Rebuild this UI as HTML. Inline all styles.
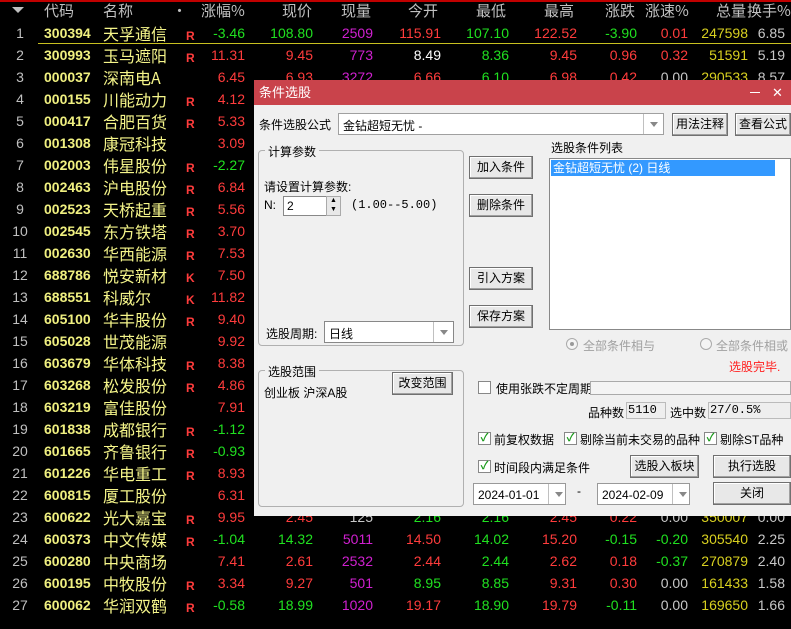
<!DOCTYPE html>
<html><head><meta charset="utf-8">
<style>
*{margin:0;padding:0;box-sizing:border-box}
body{width:791px;height:629px;background:#000;overflow:hidden;position:relative;font-family:"Liberation Sans","Noto Sans CJK SC",sans-serif}
.r{position:absolute;left:0;width:791px;height:22px;font-size:14px;line-height:22px}
.r span{position:absolute;top:0;white-space:nowrap}
.i{left:8px;width:24px;text-align:center;color:#c0c0c0;font-size:14px}
.cd{left:44px;color:#f0f080;font-weight:bold;font-size:14px}
.nm{left:103px;color:#f5f58a;font-size:16px;font-family:"Noto Sans CJK SC",sans-serif}
.mk{left:186px;color:#ff3c3c;font-weight:bold;font-size:12px;top:3px!important}
.c1{left:190px;width:55px;text-align:right}
.c2{left:250px;width:63px;text-align:right}
.c3{left:318px;width:55px;text-align:right}
.c4{left:380px;width:61px;text-align:right}
.c5{left:450px;width:59px;text-align:right}
.c6{left:515px;width:62px;text-align:right}
.c7{left:580px;width:57px;text-align:right}
.c8{left:640px;width:48px;text-align:right}
.c9{left:692px;width:56px;text-align:right;color:#d8d020}
.c10{left:750px;width:35px;text-align:right;color:#c8c8c8}
.R{color:#ff3c3c}.G{color:#20e020}.M{color:#d020d0}.W{color:#fff}.Y{color:#c8c8c8}
.hd{position:absolute;top:0;left:0;width:791px;height:22px;font-size:15px;color:#c0c0c0;line-height:22px;font-family:"Noto Sans CJK SC",sans-serif}
.hd span{position:absolute;top:0}
.dlg{position:absolute;left:254px;top:80px;width:537px;height:436px;background:#f0f0f0;font-size:12px;color:#000;font-family:"Liberation Sans","Noto Sans CJK SC",sans-serif}
.dlg *{position:absolute;white-space:nowrap}
.tb{left:0;top:0;width:537px;height:25px;background:#c9434b;color:#fff;font-size:13px;line-height:25px;padding-left:5px}
.btn{background:#e8e8e8;border:1px solid #707070;box-shadow:inset -1px -1px #a0a0a0,inset 1px 1px #fff;text-align:center;font-size:12px}
.box{background:#fff;border:1px solid #a0a0a0}
.grp{border:1px solid #b0b0b0;border-radius:4px}
.lg{background:#f0f0f0;padding:0 3px;font-size:12px}
.dd{border-left:1px solid #c0c0c0;width:20px;top:0;right:0;height:100%}
.dd:after{content:"";position:absolute;left:6px;top:8px;border:4px solid transparent;border-top:5px solid #888}
.ck{width:13px;height:13px;border:1px solid #888;background:#fff;font-size:11px;color:#1a9a1a;line-height:11px;text-align:center;font-weight:bold}
.t13{font-size:12px}
</style></head><body>
<div style="position:absolute;left:0;top:0;width:791px;height:2px;background:#c00000"></div>
<div class="hd"><span style="left:44px">代码</span><span style="left:103px">名称</span><span style="left:172px">•</span><span style="left:201px">涨幅%</span><span style="left:282px">现价</span><span style="left:341px">现量</span><span style="left:408px">今开</span><span style="left:476px">最低</span><span style="left:544px">最高</span><span style="left:605px">涨跌</span><span style="left:645px">涨速%</span><span style="left:716px">总量</span><span style="left:747px">换手%</span></div>
<div style="position:absolute;left:12px;top:7px;border:6px solid transparent;border-top:6px solid #c0c0c0"></div>
<div style="position:absolute;left:38px;top:43px;width:753px;height:1px;background:#c8c020"></div>

<div class="r" style="top:22px"><span class="i">1</span><span class="cd">300394</span><span class="nm">天孚通信</span><span class="mk">R</span><span class="c1 G">-3.46</span><span class="c2 G">108.80</span><span class="c3 M">2509</span><span class="c4 R">115.91</span><span class="c5 G">107.10</span><span class="c6 R">122.52</span><span class="c7 G">-3.90</span><span class="c8 R">0.01</span><span class="c9">247598</span><span class="c10">6.85</span></div>
<div class="r" style="top:44px"><span class="i">2</span><span class="cd">300993</span><span class="nm">玉马遮阳</span><span class="mk">R</span><span class="c1 R">11.31</span><span class="c2 R">9.45</span><span class="c3 M">773</span><span class="c4 W">8.49</span><span class="c5 G">8.36</span><span class="c6 R">9.45</span><span class="c7 R">0.96</span><span class="c8 R">0.32</span><span class="c9">51591</span><span class="c10">5.19</span></div>
<div class="r" style="top:66px"><span class="i">3</span><span class="cd">000037</span><span class="nm">深南电A</span><span class="c1 R">6.45</span><span class="c2 R">6.93</span><span class="c3 M">3272</span><span class="c4 R">6.66</span><span class="c5 G">6.10</span><span class="c6 R">6.98</span><span class="c7 R">0.42</span><span class="c8 Y">0.00</span><span class="c9">290533</span><span class="c10">8.57</span></div>
<div class="r" style="top:88px"><span class="i">4</span><span class="cd">000155</span><span class="nm">川能动力</span><span class="mk">R</span><span class="c1 R">4.12</span></div>
<div class="r" style="top:110px"><span class="i">5</span><span class="cd">000417</span><span class="nm">合肥百货</span><span class="mk">R</span><span class="c1 R">5.33</span></div>
<div class="r" style="top:132px"><span class="i">6</span><span class="cd">001308</span><span class="nm">康冠科技</span><span class="c1 R">3.09</span></div>
<div class="r" style="top:154px"><span class="i">7</span><span class="cd">002003</span><span class="nm">伟星股份</span><span class="mk">R</span><span class="c1 G">-2.27</span></div>
<div class="r" style="top:176px"><span class="i">8</span><span class="cd">002463</span><span class="nm">沪电股份</span><span class="mk">R</span><span class="c1 R">6.84</span></div>
<div class="r" style="top:198px"><span class="i">9</span><span class="cd">002523</span><span class="nm">天桥起重</span><span class="mk">R</span><span class="c1 R">5.56</span></div>
<div class="r" style="top:220px"><span class="i">10</span><span class="cd">002545</span><span class="nm">东方铁塔</span><span class="mk">R</span><span class="c1 R">3.70</span></div>
<div class="r" style="top:242px"><span class="i">11</span><span class="cd">002630</span><span class="nm">华西能源</span><span class="mk">R</span><span class="c1 R">7.53</span></div>
<div class="r" style="top:264px"><span class="i">12</span><span class="cd">688786</span><span class="nm">悦安新材</span><span class="mk">K</span><span class="c1 R">7.50</span></div>
<div class="r" style="top:286px"><span class="i">13</span><span class="cd">688551</span><span class="nm">科威尔</span><span class="mk">K</span><span class="c1 R">11.82</span></div>
<div class="r" style="top:308px"><span class="i">14</span><span class="cd">605100</span><span class="nm">华丰股份</span><span class="mk">R</span><span class="c1 R">9.40</span></div>
<div class="r" style="top:330px"><span class="i">15</span><span class="cd">605028</span><span class="nm">世茂能源</span><span class="c1 R">9.92</span></div>
<div class="r" style="top:352px"><span class="i">16</span><span class="cd">603679</span><span class="nm">华体科技</span><span class="mk">R</span><span class="c1 R">8.38</span></div>
<div class="r" style="top:374px"><span class="i">17</span><span class="cd">603268</span><span class="nm">松发股份</span><span class="mk">R</span><span class="c1 R">4.86</span></div>
<div class="r" style="top:396px"><span class="i">18</span><span class="cd">603219</span><span class="nm">富佳股份</span><span class="c1 R">7.91</span></div>
<div class="r" style="top:418px"><span class="i">19</span><span class="cd">601838</span><span class="nm">成都银行</span><span class="mk">R</span><span class="c1 G">-1.12</span></div>
<div class="r" style="top:440px"><span class="i">20</span><span class="cd">601665</span><span class="nm">齐鲁银行</span><span class="mk">R</span><span class="c1 G">-0.93</span></div>
<div class="r" style="top:462px"><span class="i">21</span><span class="cd">601226</span><span class="nm">华电重工</span><span class="mk">R</span><span class="c1 R">8.93</span></div>
<div class="r" style="top:484px"><span class="i">22</span><span class="cd">600815</span><span class="nm">厦工股份</span><span class="c1 R">6.31</span></div>
<div class="r" style="top:506px"><span class="i">23</span><span class="cd">600622</span><span class="nm">光大嘉宝</span><span class="mk">R</span><span class="c1 R">9.95</span><span class="c2 R">2.45</span><span class="c3 Y">125</span><span class="c4 G">2.16</span><span class="c5 G">2.16</span><span class="c6 R">2.45</span><span class="c7 R">0.22</span><span class="c8 Y">0.00</span><span class="c9">350007</span><span class="c10">0.00</span></div>
<div class="r" style="top:528px"><span class="i">24</span><span class="cd">600373</span><span class="nm">中文传媒</span><span class="mk">R</span><span class="c1 G">-1.04</span><span class="c2 G">14.32</span><span class="c3 M">5011</span><span class="c4 R">14.50</span><span class="c5 G">14.02</span><span class="c6 R">15.20</span><span class="c7 G">-0.15</span><span class="c8 G">-0.20</span><span class="c9">305540</span><span class="c10">2.25</span></div>
<div class="r" style="top:550px"><span class="i">25</span><span class="cd">600280</span><span class="nm">中央商场</span><span class="c1 R">7.41</span><span class="c2 R">2.61</span><span class="c3 M">2532</span><span class="c4 R">2.44</span><span class="c5 G">2.44</span><span class="c6 R">2.62</span><span class="c7 R">0.18</span><span class="c8 G">-0.37</span><span class="c9">270879</span><span class="c10">2.40</span></div>
<div class="r" style="top:572px"><span class="i">26</span><span class="cd">600195</span><span class="nm">中牧股份</span><span class="mk">R</span><span class="c1 R">3.34</span><span class="c2 R">9.27</span><span class="c3 M">501</span><span class="c4 G">8.95</span><span class="c5 G">8.85</span><span class="c6 R">9.31</span><span class="c7 R">0.30</span><span class="c8 Y">0.00</span><span class="c9">161433</span><span class="c10">1.58</span></div>
<div class="r" style="top:594px"><span class="i">27</span><span class="cd">600062</span><span class="nm">华润双鹤</span><span class="mk">R</span><span class="c1 G">-0.58</span><span class="c2 G">18.99</span><span class="c3 M">1020</span><span class="c4 R">19.17</span><span class="c5 G">18.90</span><span class="c6 R">19.79</span><span class="c7 G">-0.11</span><span class="c8 Y">0.00</span><span class="c9">169650</span><span class="c10">1.66</span></div>

<div class="dlg">
 <div class="tb">条件选股</div>
 <div style="left:496px;top:12px;width:10px;height:1px;background:#fff"></div>
 <div style="left:518px;top:5px;color:#fff;font-size:13px">✕</div>
 <div class="t13" style="left:5px;top:36px">条件选股公式</div>
 <div class="box" style="left:84px;top:33px;width:326px;height:22px"><span class="t13" style="left:4px;top:3px">金钻超短无忧 -</span><span class="dd"></span></div>
 <div class="btn" style="left:418px;top:33px;width:56px;height:23px;line-height:21px">用法注释</div>
 <div class="btn" style="left:481px;top:33px;width:56px;height:23px;line-height:21px">查看公式</div>

 <div class="grp" style="left:4px;top:70px;width:206px;height:196px"></div>
 <div class="lg" style="left:11px;top:63px">计算参数</div>
 <div class="t13" style="left:10px;top:98px">请设置计算参数:</div>
 <div style="left:10px;top:118px">N:</div>
 <div class="box" style="left:29px;top:116px;width:44px;height:20px;border-color:#888"><span style="left:3px;top:2px">2</span></div>
 <div style="left:72px;top:116px;width:15px;height:20px;background:#e8e8e8;border:1px solid #aaa"><span style="left:3px;top:0;font-size:7px">▲</span><span style="left:3px;top:9px;font-size:7px">▼</span></div>
 <div style="left:97px;top:118px;font-family:'Liberation Mono',monospace">(1.00--5.00)</div>
 <div class="t13" style="left:12px;top:245px">选股周期:</div>
 <div class="box" style="left:70px;top:241px;width:130px;height:22px;border-color:#888"><span class="t13" style="left:4px;top:3px">日线</span><span class="dd"></span></div>

 <div class="btn" style="left:215px;top:76px;width:64px;height:23px;line-height:21px">加入条件</div>
 <div class="btn" style="left:215px;top:114px;width:64px;height:23px;line-height:21px">删除条件</div>
 <div class="btn" style="left:215px;top:187px;width:64px;height:23px;line-height:21px">引入方案</div>
 <div class="btn" style="left:215px;top:225px;width:64px;height:23px;line-height:21px">保存方案</div>

 <div class="t13" style="left:297px;top:59px">选股条件列表</div>
 <div class="box" style="left:295px;top:78px;width:242px;height:172px;border-color:#888"></div>
 <div style="left:297px;top:80px;width:224px;height:16px;background:#3399ff;color:#fff;font-size:12px;line-height:16px;padding-left:2px">金钻超短无忧 (2) 日线</div>

 <div style="left:312px;top:258px;width:12px;height:12px;border:1px solid #aaa;border-radius:50%;background:#f4f4f4"><span style="left:3px;top:3px;width:4px;height:4px;border-radius:50%;background:#999"></span></div>
 <div class="t13" style="left:329px;top:257px;color:#a0a0a0">全部条件相与</div>
 <div style="left:446px;top:258px;width:12px;height:12px;border:1px solid #aaa;border-radius:50%;background:#f4f4f4"></div>
 <div class="t13" style="left:462px;top:257px;color:#a0a0a0">全部条件相或</div>
 <div class="t13" style="left:475px;top:278px;color:#ff2020">选股完毕.</div>

 <div class="grp" style="left:4px;top:290px;width:206px;height:137px"></div>
 <div class="lg" style="left:11px;top:283px">选股范围</div>
 <div class="t13" style="left:10px;top:304px">创业板 沪深A股</div>
 <div class="btn" style="left:138px;top:292px;width:61px;height:23px;line-height:21px">改变范围</div>

 <div class="ck" style="left:224px;top:301px"></div>
 <div class="t13" style="left:242px;top:300px">使用张跌不定周期</div>
 <div class="box" style="left:336px;top:301px;width:201px;height:14px;border-color:#aaa;background:#f4f4f4"></div>
 <div class="t13" style="left:334px;top:324px">品种数</div>
 <div style="left:372px;top:322px;width:40px;height:17px;border:1px solid #bbb;background:#eee;line-height:15px;padding-left:1px;font-family:'Liberation Mono',monospace">5110</div>
 <div class="t13" style="left:416px;top:324px">选中数</div>
 <div style="left:454px;top:322px;width:83px;height:17px;border:1px solid #bbb;background:#eee;line-height:15px;padding-left:1px;font-family:'Liberation Mono',monospace">27/0.5%</div>

 <div class="ck" style="left:224px;top:352px">✓</div>
 <div class="t13" style="left:240px;top:351px">前复权数据</div>
 <div class="ck" style="left:310px;top:352px">✓</div>
 <div class="t13" style="left:326px;top:351px">剔除当前未交易的品种</div>
 <div class="ck" style="left:450px;top:352px">✓</div>
 <div class="t13" style="left:466px;top:351px">剔除ST品种</div>

 <div class="ck" style="left:224px;top:380px">✓</div>
 <div class="t13" style="left:240px;top:379px">时间段内满足条件</div>
 <div class="btn" style="left:376px;top:375px;width:69px;height:23px;line-height:21px">选股入板块</div>
 <div class="btn" style="left:459px;top:375px;width:78px;height:23px;line-height:21px">执行选股</div>
 <div class="box" style="left:219px;top:403px;width:93px;height:22px;border-color:#999"><span style="left:4px;top:4px">2024-01-01</span><span class="dd" style="width:17px"></span></div>
 <div style="left:323px;top:404px">-</div>
 <div class="box" style="left:343px;top:403px;width:93px;height:22px;border-color:#999"><span style="left:4px;top:4px">2024-02-09</span><span class="dd" style="width:17px"></span></div>
 <div class="btn" style="left:459px;top:402px;width:78px;height:23px;line-height:21px">关闭</div>
</div>
</body></html>
